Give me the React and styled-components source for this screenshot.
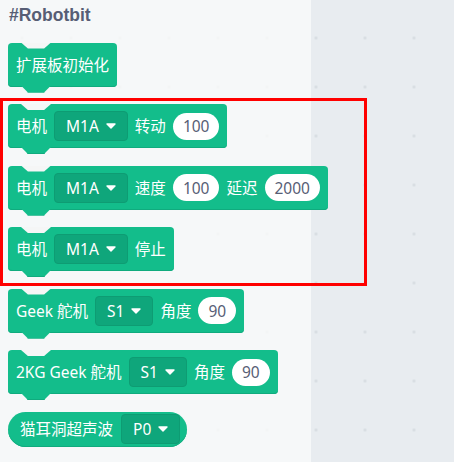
import React from "react";
import styled, { createGlobalStyle } from "styled-components";

const GlobalStyle = createGlobalStyle`
    html, body {
        margin: 0;
        padding: 0;
        background: #e8ecf0;
    }
`;

const blockColor = "#13bd8b";
const notchBg = "#f5f6f6";

function Caret() {
    return (
        <svg width="10" height="6" viewBox="0 0 10 6">
            <path
                d="M1 1 L9 1 L5 5 Z"
                fill="#ffffff"
                stroke="#ffffff"
                strokeWidth="1.4"
                strokeLinejoin="round"
            />
        </svg>
    );
}

function Dropdown({ value }) {
    return (
        <Menu>
            <span>{value}</span>
            <Caret />
        </Menu>
    );
}

const blocks = [
    { parts: [{ t: "扩展板初始化" }] },
    {
        parts: [
            { t: "电机" },
            { d: "M1A" },
            { t: "转动" },
            { n: "100" },
        ],
    },
    {
        parts: [
            { t: "电机" },
            { d: "M1A" },
            { t: "速度" },
            { n: "100" },
            { t: "延迟" },
            { n: "2000" },
        ],
    },
    { parts: [{ t: "电机" }, { d: "M1A" }, { t: "停止" }] },
    {
        parts: [{ t: "Geek 舵机" }, { d: "S1" }, { t: "角度" }, { n: "90" }],
    },
    {
        parts: [
            { t: "2KG Geek 舵机" },
            { d: "S1" },
            { t: "角度" },
            { n: "90" },
        ],
    },
];

function Part({ p }) {
    if (p.d) return <Dropdown value={p.d} />;
    if (p.n) return <NumberInput>{p.n}</NumberInput>;
    return <Label>{p.t}</Label>;
}

function App() {
    return (
        <>
            <GlobalStyle />
            <Workspace>
                <Flyout>
                    <Category>#Robotbit</Category>
                    {blocks.map((b, i) => (
                        <StackBlock key={i}>
                            {b.parts.map((p, j) => (
                                <Part key={j} p={p} />
                            ))}
                        </StackBlock>
                    ))}
                    <Reporter>
                        <Label>猫耳洞超声波</Label>
                        <Dropdown value="P0" />
                    </Reporter>
                </Flyout>
                <Highlight />
            </Workspace>
        </>
    );
}

const Workspace = styled.div`
    position: relative;
    width: 454px;
    height: 462px;
    overflow: hidden;
    background-color: #e8ecf0;
    background-image: radial-gradient(
        circle,
        #d8dde2 1.2px,
        transparent 1.8px
    );
    background-size: 49px 49px;
    background-position: -2.5px 13.5px;
    font-family: "Noto Sans", "Noto Sans CJK SC", sans-serif;
`;

const Flyout = styled.div`
    width: 311px;
    height: 100%;
    box-sizing: border-box;
    background: rgba(249, 250, 250, 0.82);
    display: flex;
    flex-direction: column;
    align-items: flex-start;
    gap: 17.5px;
    padding: 5px 0 0 8px;
`;

const Category = styled.div`
    font-family: "Liberation Sans", Arial, sans-serif;
    font-weight: bold;
    font-size: 17.5px;
    line-height: 20px;
    color: #575e75;
    padding-left: 1px;
`;

const StackBlock = styled.div`
    position: relative;
    display: flex;
    align-items: center;
    gap: 7px;
    height: 44px;
    box-sizing: border-box;
    padding: 0 8px;
    background: ${blockColor};
    border-radius: 4px;
    box-shadow: inset 0 -1px 0 #10ab7e;
    &::before {
        content: "";
        position: absolute;
        top: 0;
        left: 13px;
        width: 30px;
        height: 6px;
        background: ${notchBg};
        clip-path: polygon(0 0, 100% 0, 77% 100%, 23% 100%);
    }
    &::after {
        content: "";
        position: absolute;
        bottom: -6px;
        left: 13px;
        width: 30px;
        height: 7px;
        background: ${blockColor};
        border-bottom: 1px solid #10ab7e;
        box-sizing: border-box;
        clip-path: polygon(0 0, 100% 0, 77% 100%, 23% 100%);
    }
`;

const Reporter = styled.div`
    display: flex;
    align-items: center;
    gap: 8px;
    height: 35px;
    box-sizing: border-box;
    padding: 0 7px 0 12px;
    background: ${blockColor};
    border-radius: 18px;
    box-shadow: inset 0 -1px 0 #10ab7e;
`;

const Label = styled.span`
    color: #ffffff;
    font-size: 15.5px;
    line-height: 20px;
    white-space: nowrap;
`;

const Menu = styled.div`
    display: flex;
    align-items: center;
    gap: 7px;
    height: 30px;
    box-sizing: border-box;
    padding: 0 11px;
    background: #0fa67b;
    border: 1px solid #0e9c73;
    border-radius: 4px;
    color: #ffffff;
    font-size: 15.5px;
    line-height: 20px;
    svg {
        display: block;
    }
`;

const NumberInput = styled.div`
    display: flex;
    align-items: center;
    justify-content: center;
    height: 27px;
    min-width: 37px;
    box-sizing: border-box;
    padding: 0 10px;
    background: #ffffff;
    border-radius: 14px;
    color: #575e75;
    font-size: 15.5px;
    line-height: 20px;
`;

const Highlight = styled.div`
    position: absolute;
    left: 0;
    top: 98px;
    width: 367px;
    height: 188px;
    box-sizing: border-box;
    border: 3px solid #ff0000;
    pointer-events: none;
`;

export default App;
